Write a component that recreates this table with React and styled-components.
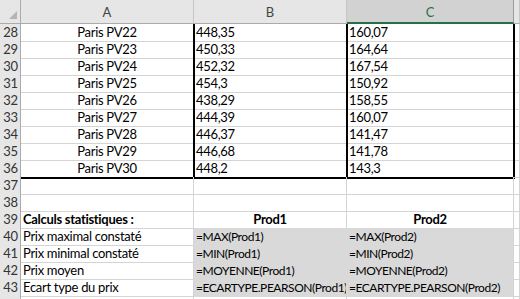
import React from "react";
import styled, { createGlobalStyle, css } from "styled-components";

const GlobalStyle = createGlobalStyle`
  html, body { margin: 0; padding: 0; background: #ffffff; }
  body { font-family: Lato, "Liberation Sans", sans-serif; }
`;

const COLS = "21px 173px 153px 167px 1fr";
const GRID = "#d4d4d4";
const FILL = "#d9d9d9";

const Sheet = styled.div`
  width: 520px;
  height: 299px;
  overflow: hidden;
  background: #fff;
`;

const HeaderRow = styled.div`
  display: grid;
  grid-template-columns: ${COLS};
  height: 24px;
  background: #e6e6e6;
`;

const Corner = styled.div`
  position: relative;
  box-sizing: border-box;
  border-right: 1px solid #ababab;
  border-bottom: 1px solid #ababab;
  &::after {
    content: "";
    position: absolute;
    right: 3px;
    bottom: 4px;
    width: 0;
    height: 0;
    border-left: 8px solid transparent;
    border-bottom: 8px solid #b4b4b4;
  }
`;

const ColHeader = styled.div`
  box-sizing: border-box;
  display: flex;
  justify-content: center;
  align-items: flex-end;
  padding-bottom: 3px;
  font-size: 13px;
  line-height: 16px;
  color: #444;
  border-right: 1px solid #c6c6c6;
  border-bottom: 1px solid #ababab;
  ${(p) =>
    p.$selected &&
    css`
      background: #d2d2d2;
      color: #217346;
      border-right-color: #9b9b9b;
      border-bottom: 2px solid #217346;
      padding-bottom: 2px;
    `}
`;

const Row = styled.div`
  display: grid;
  grid-template-columns: ${COLS};
  height: 17px;
`;

const RowNum = styled.div`
  box-sizing: border-box;
  background: #e6e6e6;
  color: #333;
  font-size: 13px;
  letter-spacing: -0.2px;
  line-height: 17px;
  text-align: center;
  border-right: 1px solid #ababab;
  border-bottom: 1px solid #d0d0d0;
  padding-left: 1px;
`;

const Cell = styled.div`
  box-sizing: border-box;
  font-size: ${(p) => (p.$fill ? "12px" : "13px")};
  letter-spacing: ${(p) => (p.$fill ? "-0.45px" : "-0.3px")};
  line-height: 17px;
  color: #000;
  white-space: nowrap;
  overflow: hidden;
  padding: 0 2px;
  text-align: ${(p) => p.$align || "left"};
  font-weight: ${(p) => (p.$bold ? 700 : 400)};
  border-right: 1px solid ${(p) => (p.$fill && !p.$edge ? FILL : GRID)};
  border-bottom: 1px solid ${(p) => (p.$fill ? FILL : GRID)};
  background: ${(p) => (p.$fill ? FILL : "transparent")};
  ${(p) =>
    p.$thickRight &&
    css`
      border-right-color: #000;
      overflow: visible;
    `}
  ${(p) =>
    p.$thickBottom &&
    css`
      border-bottom-color: #000;
    `}
  box-shadow: ${(p) => {
    const s = [];
    if (p.$thickRight) s.push("1px 0 0 #000");
    if (p.$thickBottom) s.push("0 1px 0 #000");
    if (p.$thickRight && p.$thickBottom) s.push("1px 1px 0 #000");
    return s.length ? s.join(", ") : "none";
  }};
`;

const data = [
  [28, "Paris PV22", "448,35", "160,07"],
  [29, "Paris PV23", "450,33", "164,64"],
  [30, "Paris PV24", "452,32", "167,54"],
  [31, "Paris PV25", "454,3", "150,92"],
  [32, "Paris PV26", "438,29", "158,55"],
  [33, "Paris PV27", "444,39", "160,07"],
  [34, "Paris PV28", "446,37", "141,47"],
  [35, "Paris PV29", "446,68", "141,78"],
  [36, "Paris PV30", "448,2", "143,3"],
];

const stats = [
  [40, "Prix maximal constaté", "=MAX(Prod1)", "=MAX(Prod2)"],
  [41, "Prix minimal constaté", "=MIN(Prod1)", "=MIN(Prod2)"],
  [42, "Prix moyen", "=MOYENNE(Prod1)", "=MOYENNE(Prod2)"],
  [43, "Ecart type du prix", "=ECARTYPE.PEARSON(Prod1)", "=ECARTYPE.PEARSON(Prod2)"],
];

export default function App() {
  return (
    <>
      <GlobalStyle />
      <Sheet>
        <HeaderRow>
          <Corner />
          <ColHeader>A</ColHeader>
          <ColHeader>B</ColHeader>
          <ColHeader $selected>C</ColHeader>
          <ColHeader />
        </HeaderRow>
        {data.map(([n, a, b, c]) => {
          const last = n === 36;
          return (
            <Row key={n}>
              <RowNum>{n}</RowNum>
              <Cell $align="center" $thickRight $thickBottom={last}>{a}</Cell>
              <Cell $thickRight $thickBottom={last}>{b}</Cell>
              <Cell $thickRight $thickBottom={last}>{c}</Cell>
              <Cell />
            </Row>
          );
        })}
        {[37, 38].map((n) => (
          <Row key={n}>
            <RowNum>{n}</RowNum>
            <Cell />
            <Cell />
            <Cell />
            <Cell />
          </Row>
        ))}
        <Row>
          <RowNum>39</RowNum>
          <Cell $bold>Calculs statistiques :</Cell>
          <Cell $bold $align="center">Prod1</Cell>
          <Cell $bold $align="center">Prod2</Cell>
          <Cell />
        </Row>
        {stats.map(([n, a, b, c]) => (
          <Row key={n}>
            <RowNum>{n}</RowNum>
            <Cell>{a}</Cell>
            <Cell $fill>{b}</Cell>
            <Cell $fill $edge>{c}</Cell>
            <Cell />
          </Row>
        ))}
        <Row>
          <RowNum />
          <Cell />
          <Cell />
          <Cell />
          <Cell />
        </Row>
      </Sheet>
    </>
  );
}
